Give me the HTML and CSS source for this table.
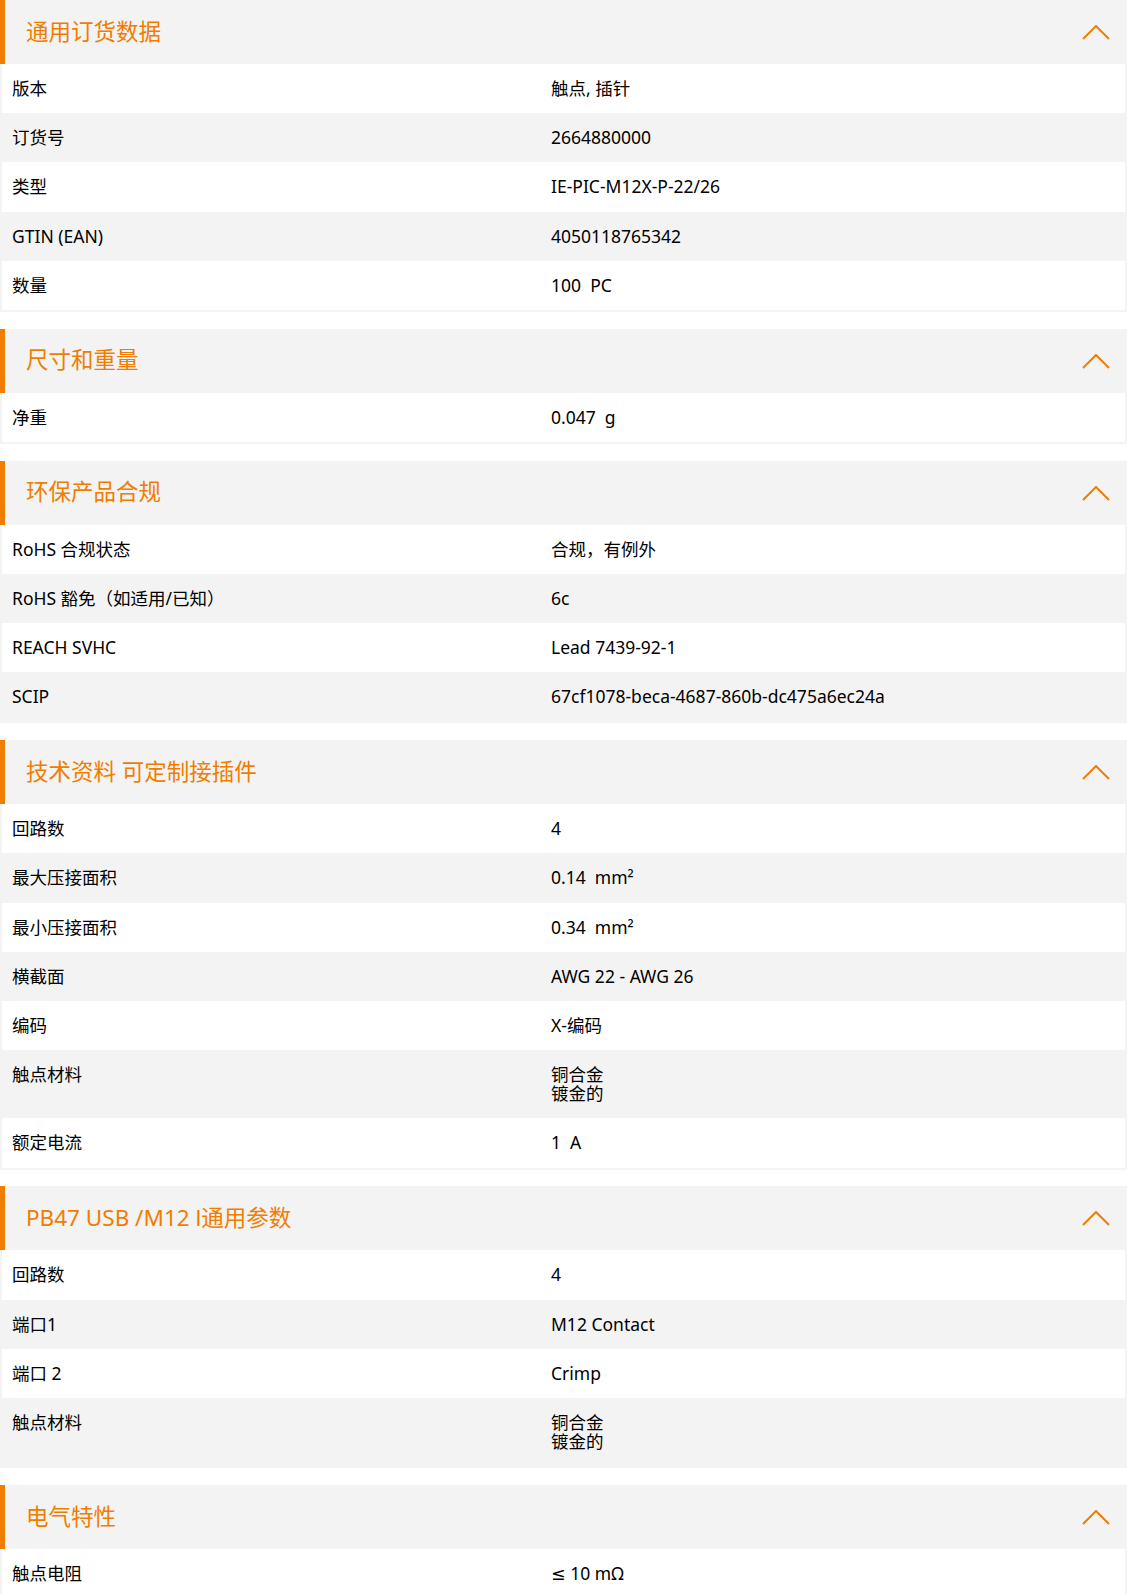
FILE: index.html
```html
<!DOCTYPE html>
<html lang="zh">
<head>
<meta charset="utf-8">
<title>产品数据</title>
<link rel="stylesheet" href="styles.css">
</head>
<body>
<div class="page">

<section class="sec">
  <div class="sec-head"><h2>通用订货数据</h2><svg class="chev" viewBox="0 0 28 15"><polyline points="1,14 14,1 27,14"/></svg></div>
  <div class="sec-body">
    <div class="row"><div class="lbl">版本</div><div class="val">触点, 插针</div></div>
    <div class="row"><div class="lbl">订货号</div><div class="val">2664880000</div></div>
    <div class="row"><div class="lbl">类型</div><div class="val">IE-PIC-M12X-P-22/26</div></div>
    <div class="row"><div class="lbl">GTIN (EAN)</div><div class="val">4050118765342</div></div>
    <div class="row"><div class="lbl">数量</div><div class="val">100&nbsp; PC</div></div>
  </div>
</section>

<section class="sec">
  <div class="sec-head"><h2>尺寸和重量</h2><svg class="chev" viewBox="0 0 28 15"><polyline points="1,14 14,1 27,14"/></svg></div>
  <div class="sec-body">
    <div class="row"><div class="lbl">净重</div><div class="val">0.047&nbsp; g</div></div>
  </div>
</section>

<section class="sec">
  <div class="sec-head"><h2>环保产品合规</h2><svg class="chev" viewBox="0 0 28 15"><polyline points="1,14 14,1 27,14"/></svg></div>
  <div class="sec-body">
    <div class="row"><div class="lbl">RoHS 合规状态</div><div class="val">合规，有例外</div></div>
    <div class="row"><div class="lbl">RoHS 豁免（如适用/已知）</div><div class="val">6c</div></div>
    <div class="row"><div class="lbl">REACH SVHC</div><div class="val">Lead 7439-92-1</div></div>
    <div class="row"><div class="lbl">SCIP</div><div class="val">67cf1078-beca-4687-860b-dc475a6ec24a</div></div>
  </div>
</section>

<section class="sec">
  <div class="sec-head"><h2>技术资料 可定制接插件</h2><svg class="chev" viewBox="0 0 28 15"><polyline points="1,14 14,1 27,14"/></svg></div>
  <div class="sec-body">
    <div class="row"><div class="lbl">回路数</div><div class="val">4</div></div>
    <div class="row"><div class="lbl">最大压接面积</div><div class="val">0.14&nbsp; mm²</div></div>
    <div class="row"><div class="lbl">最小压接面积</div><div class="val">0.34&nbsp; mm²</div></div>
    <div class="row"><div class="lbl">横截面</div><div class="val">AWG 22 - AWG 26</div></div>
    <div class="row"><div class="lbl">编码</div><div class="val">X-编码</div></div>
    <div class="row"><div class="lbl">触点材料</div><div class="val multi"><span>铜合金</span><span>镀金的</span></div></div>
    <div class="row"><div class="lbl">额定电流</div><div class="val">1&nbsp; A</div></div>
  </div>
</section>

<section class="sec">
  <div class="sec-head"><h2>PB47 USB /M12 l通用参数</h2><svg class="chev" viewBox="0 0 28 15"><polyline points="1,14 14,1 27,14"/></svg></div>
  <div class="sec-body">
    <div class="row"><div class="lbl">回路数</div><div class="val">4</div></div>
    <div class="row"><div class="lbl">端口1</div><div class="val">M12 Contact</div></div>
    <div class="row"><div class="lbl">端口 2</div><div class="val">Crimp</div></div>
    <div class="row"><div class="lbl">触点材料</div><div class="val multi"><span>铜合金</span><span>镀金的</span></div></div>
  </div>
</section>

<section class="sec">
  <div class="sec-head"><h2>电气特性</h2><svg class="chev" viewBox="0 0 28 15"><polyline points="1,14 14,1 27,14"/></svg></div>
  <div class="sec-body">
    <div class="row"><div class="lbl">触点电阻</div><div class="val">≤ 10 mΩ</div></div>
  </div>
</section>

</div>
</body>
</html>
```

FILE: styles.css
```css
html, body {
  margin: 0;
  padding: 0;
  background: #ffffff;
}

body {
  font-family: "Noto Sans", "DejaVu Sans", "Noto Sans CJK SC", sans-serif;
  color: #000000;
}

.page {
  width: 1127px;
}

.sec {
  margin-bottom: 16.7px;
}

.sec-head {
  height: 64px;
  background: #f3f3f3;
  border-left: 5px solid #f07d00;
  display: flex;
  align-items: center;
  justify-content: space-between;
  padding: 0 17px 0 21px;
}

.sec-head h2 {
  margin: 0;
  font-weight: normal;
  font-size: 22.5px;
  color: #f07d00;
  line-height: 1;
}

.chev {
  width: 28px;
  height: 15px;
  margin-top: 1px;
}

.chev polyline {
  fill: none;
  stroke: #f07d00;
  stroke-width: 2;
}

.sec-body {
  border: 2px solid #f3f3f3;
  border-top: none;
}

.row {
  display: flex;
  align-items: flex-start;
  padding: 15px 0;
  font-size: 17.5px;
  line-height: 19.2px;
}

.row:nth-child(even) {
  background: #f3f3f3;
}

.lbl {
  width: 539px;
  padding-left: 10px;
}

.val {
  flex: 1;
}

.val.multi {
  display: flex;
  flex-direction: column;
}

.val.multi span {
  display: block;
  height: 19.2px;
  line-height: 19.2px;
}
```
